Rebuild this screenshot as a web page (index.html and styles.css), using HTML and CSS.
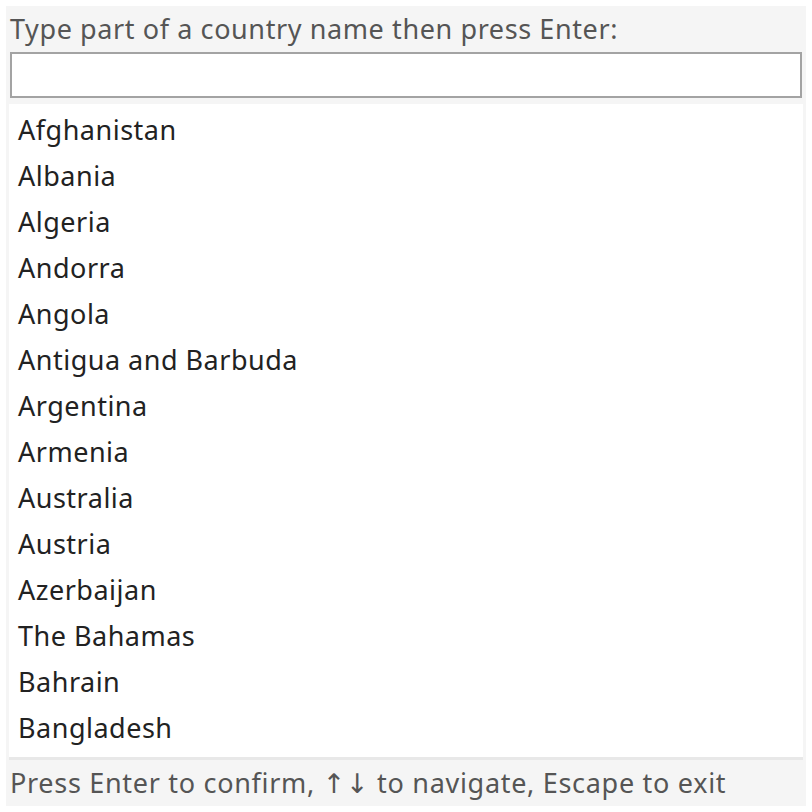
FILE: index.html
```html
<!DOCTYPE html>
<html>
<head>
<meta charset="utf-8">
<link rel="stylesheet" href="styles.css">
</head>
<body>
<div class="panel">
  <div class="label">Type part of a country name then press Enter:</div>
  <div class="input"></div>
  <ul class="list">
    <li>Afghanistan</li>
    <li>Albania</li>
    <li>Algeria</li>
    <li>Andorra</li>
    <li>Angola</li>
    <li>Antigua and Barbuda</li>
    <li>Argentina</li>
    <li>Armenia</li>
    <li>Australia</li>
    <li>Austria</li>
    <li>Azerbaijan</li>
    <li>The Bahamas</li>
    <li>Bahrain</li>
    <li>Bangladesh</li>
  </ul>
  <div class="footer">Press Enter to confirm, ↑↓ to navigate, Escape to exit</div>
</div>
</body>
</html>
```
FILE: styles.css
```css
html, body {
  margin: 0;
  padding: 0;
  background: #ffffff;
}
body {
  font-family: "Noto Sans", "DejaVu Sans", sans-serif;
  font-size: 27px;
}
.panel {
  margin: 6px;
  width: 800px;
  height: 800px;
  box-sizing: border-box;
  background: #f5f5f5;
  padding: 0 4px;
  display: flex;
  flex-direction: column;
}
.label {
  height: 46px;
  line-height: 46px;
  color: #555555;
  letter-spacing: 0.6px;
  white-space: nowrap;
}
.input {
  height: 46px;
  box-sizing: border-box;
  border: 2px solid #a3a3a3;
  background: #ffffff;
}
.list {
  list-style: none;
  margin: 6px -1px 0;
  padding: 3px 0 6px;
  background: #ffffff;
  border-bottom: 3px solid #e8e8e8;
  flex: 1;
}
.list li {
  height: 46px;
  line-height: 46px;
  padding-left: 9px;
  color: #222222;
  letter-spacing: 0.5px;
}
.footer {
  height: 46px;
  line-height: 46px;
  color: #555555;
  letter-spacing: 0.7px;
  white-space: nowrap;
}
```
